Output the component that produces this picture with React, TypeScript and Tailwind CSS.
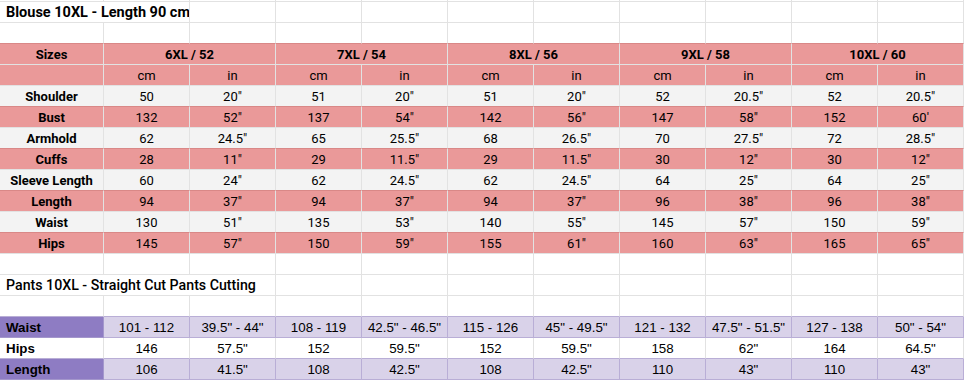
import React from "react";

type Cell = { t?: string; span?: number; cls?: string };

const RED = "bg-[#ea9999] border-[#d98887]";
const GRAY = "bg-[#f3f3f3] border-r-[#e2e2e2] border-b-[#d98887]";
const PURPLE_LABEL = "bg-[#8e7cc3] border-[#a497cc]";
const PURPLE = "bg-[#d9d2e9] border-[#b9aed6]";

function Row({ cells, cls = "" }: { cells: Cell[]; cls?: string }) {
  return (
    <>
      {cells.map((c, i) => (
        <div
          key={i}
          className={`h-[21px] pt-[2px] border-b border-r border-[#e2e2e2] flex items-center justify-center whitespace-nowrap overflow-hidden ${
            c.span === 2 ? "col-span-2" : c.span === 3 ? "col-span-3" : ""
          } ${cls} ${c.cls ?? ""}`}
        >
          {c.t}
        </div>
      ))}
    </>
  );
}

const blank = (n = 11): Cell[] => Array.from({ length: n }, () => ({}));

const blouse: { label: string; vals: string[] }[] = [
  { label: "Shoulder", vals: ["50", "20\"", "51", "20\"", "51", "20\"", "52", "20.5\"", "52", "20.5\""] },
  { label: "Bust", vals: ["132", "52\"", "137", "54\"", "142", "56\"", "147", "58\"", "152", "60'"] },
  { label: "Armhold", vals: ["62", "24.5\"", "65", "25.5\"", "68", "26.5\"", "70", "27.5\"", "72", "28.5\""] },
  { label: "Cuffs", vals: ["28", "11\"", "29", "11.5\"", "29", "11.5\"", "30", "12\"", "30", "12\""] },
  { label: "Sleeve Length", vals: ["60", "24\"", "62", "24.5\"", "62", "24.5\"", "64", "25\"", "64", "25\""] },
  { label: "Length", vals: ["94", "37\"", "94", "37\"", "94", "37\"", "96", "38\"", "96", "38\""] },
  { label: "Waist", vals: ["130", "51\"", "135", "53\"", "140", "55\"", "145", "57\"", "150", "59\""] },
  { label: "Hips", vals: ["145", "57\"", "150", "59\"", "155", "61\"", "160", "63\"", "165", "65\""] },
];

const pants: { label: string; vals: string[] }[] = [
  { label: "Waist", vals: ["101 - 112", "39.5\" - 44\"", "108 - 119", "42.5\" - 46.5\"", "115 - 126", "45\" - 49.5\"", "121 - 132", "47.5\" - 51.5\"", "127 - 138", "50\" - 54\""] },
  { label: "Hips", vals: ["146", "57.5\"", "152", "59.5\"", "152", "59.5\"", "158", "62\"", "164", "64.5\""] },
  { label: "Length", vals: ["106", "41.5\"", "108", "42.5\"", "108", "42.5\"", "110", "43\"", "110", "43\""] },
];

const sizes = ["6XL / 52", "7XL / 54", "8XL / 56", "9XL / 58", "10XL / 60"];

export default function App() {
  return (
    <div className="w-[965px] h-[381px] bg-white overflow-hidden text-black">
      <div className="grid grid-cols-[104px_repeat(10,86px)] font-['Roboto',sans-serif] text-[13px]">
        {/* sliver of the row above */}
        {blank().map((_, i) => (
          <div key={i} className="h-[2px] border-b border-r border-[#e2e2e2]" />
        ))}

        <Row
          cells={[
            { t: "Blouse 10XL - Length 90 cm", span: 2, cls: "justify-start pl-[6px] font-bold text-[14.5px]" },
            ...blank(9),
          ]}
        />
        <Row cells={blank()} cls="border-b-[#d98887]" />

        <Row
          cls={`${RED} font-bold`}
          cells={[{ t: "Sizes" }, ...sizes.map((s) => ({ t: s, span: 2 }))]}
        />
        <Row
          cls={RED}
          cells={[{}, ...sizes.flatMap(() => [{ t: "cm" }, { t: "in" }])]}
        />

        {blouse.map((r, i) => (
          <Row
            key={r.label}
            cls={i % 2 === 0 ? GRAY : RED}
            cells={[{ t: r.label, cls: "font-bold" }, ...r.vals.map((v) => ({ t: v }))]}
          />
        ))}

        <Row cells={blank()} />
        <Row
          cells={[
            { t: "Pants 10XL - Straight Cut Pants Cutting", span: 3, cls: "justify-start pl-[6px] font-medium text-[14.2px]" },
            ...blank(8),
          ]}
        />
        <Row cells={blank()} cls="border-b-[#b9aed6]" />

        {pants.map((r, i) => (
          <React.Fragment key={r.label}>
            <div
              className={`h-[21px] pt-[2px] border-b border-r flex items-center pl-[6px] font-['Liberation_Sans',Arial,sans-serif] text-[13.33px] font-bold ${
                i === 1 ? "bg-white border-r-[#e2e2e2] border-b-[#b9aed6]" : PURPLE_LABEL
              }`}
            >
              {r.label}
            </div>
            {r.vals.map((v, j) => (
              <div
                key={j}
                className={`h-[21px] pt-[2px] border-b border-r flex items-center justify-center whitespace-nowrap font-['Liberation_Sans',Arial,sans-serif] text-[13.33px] ${
                  i === 1 ? "bg-white border-r-[#e2e2e2] border-b-[#b9aed6]" : PURPLE
                }`}
              >
                {v}
              </div>
            ))}
          </React.Fragment>
        ))}
      </div>
    </div>
  );
}
